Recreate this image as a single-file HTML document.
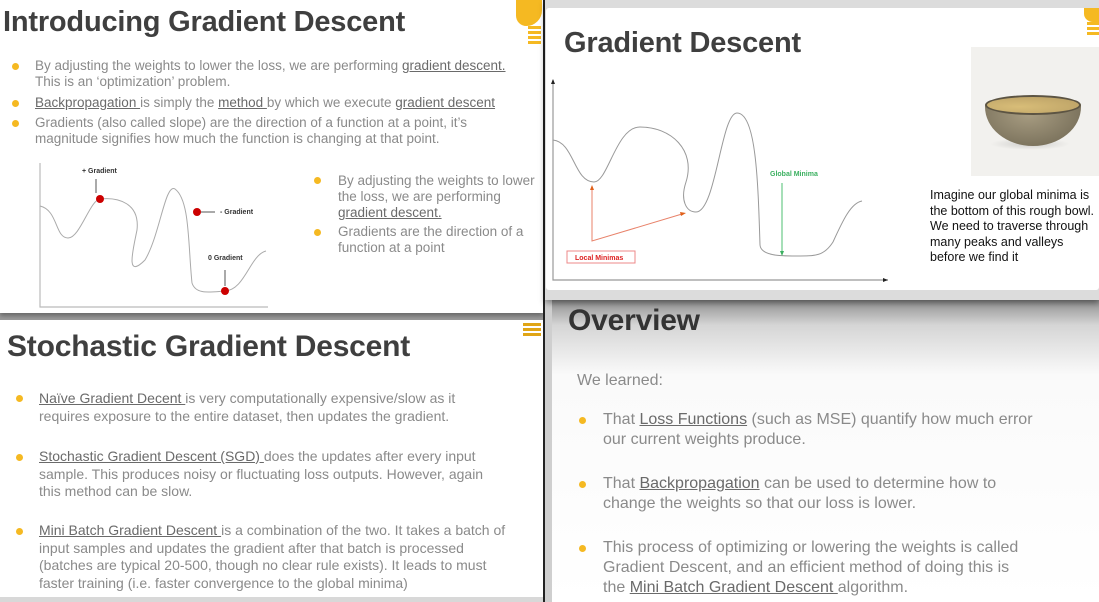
<!DOCTYPE html>
<html><head><meta charset="utf-8"><style>
*{margin:0;padding:0;box-sizing:border-box}
body{width:1099px;height:602px;overflow:hidden;background:#9a9a9a;font-family:"Liberation Sans",sans-serif;position:relative}
.abs{position:absolute}
.t{color:#3f3f3f;font-weight:bold;letter-spacing:-0.2px}
.b{color:#8a8a8a;font-size:13.5px;line-height:16px;white-space:nowrap}
.b u{color:#6a6a6a}
.dot{position:absolute;width:7px;height:7px;border-radius:50%;background:#f5b922}
</style></head><body>

<!-- top-left slide -->
<div class="abs" style="left:0;top:0;width:543px;height:313px;background:#fff;box-shadow:0 3px 4px rgba(0,0,0,.3)"></div>
<div class="abs t" style="left:3px;top:6px;font-size:29px">Introducing Gradient Descent</div>
<div class="abs" style="left:516px;top:0;width:26px;height:26px;background:#f5b922;border-radius:0 0 60% 40%"></div>
<div class="abs" style="left:528px;top:26px;width:13px;height:20px;background:repeating-linear-gradient(#f5b922 0 3px,#fff 3px 5px)"></div>
<div class="dot" style="left:12px;top:63px"></div>
<div class="abs b" style="left:35px;top:58px">By adjusting the weights to lower the loss, we are performing <u>gradient descent.</u><br>This is an ‘optimization’ problem.</div>
<div class="dot" style="left:12px;top:100px"></div>
<div class="abs b" style="left:35px;top:95px"><u>Backpropagation </u>is simply the <u>method </u>by which we execute <u>gradient descent</u></div>
<div class="dot" style="left:12px;top:120px"></div>
<div class="abs b" style="left:35px;top:115px">Gradients (also called slope) are the direction of a function at a point, it’s<br>magnitude signifies how much the function is changing at that point.</div>
<svg class="abs" style="left:0;top:155px" width="300" height="160">
<path d="M40 8 V152 H268" stroke="#bbb" stroke-width="1.2" fill="none"/>
<path d="M40 51 C58 55 55 83 68 83 C80 83 90 45 100 44 C118 42 140 48 137 75 C133 95 125 125 145 105 C160 80 165 28 175 34 C190 45 188 90 192 128 C196 140 210 137 225 136 C245 135 250 100 266 96" stroke="#aaa" fill="none"/>
<circle cx="100" cy="44" r="4" fill="#c00"/><circle cx="197" cy="57" r="4" fill="#c00"/><circle cx="225" cy="136" r="4" fill="#c00"/>
<path d="M96 24V38M201 57H215M225 115V131" stroke="#555"/>
<text x="82" y="18" font-size="7" fill="#333" font-weight="bold">+ Gradient</text>
<text x="220" y="59" font-size="7" fill="#333" font-weight="bold">- Gradient</text>
<text x="208" y="105" font-size="7" fill="#333" font-weight="bold">0 Gradient</text>
</svg>
<div class="dot" style="left:314px;top:177px"></div>
<div class="abs b" style="left:338px;top:173px">By adjusting the weights to lower<br>the loss, we are performing<br><u>gradient descent.</u></div>
<div class="dot" style="left:314px;top:229px"></div>
<div class="abs b" style="left:338px;top:224px">Gradients are the direction of a<br>function at a point</div>

<!-- bottom-left slide -->
<div class="abs" style="left:0;top:320px;width:543px;height:277px;background:#fff"></div>
<div class="abs" style="left:0;top:597px;width:543px;height:5px;background:#d8d8d8"></div>
<div class="abs" style="left:523px;top:323px;width:18px;height:15px;background:repeating-linear-gradient(#e0a516 0 3px,#fff 3px 5px)"></div>
<div class="abs t" style="left:7px;top:330px;font-size:30px">Stochastic Gradient Descent</div>
<div class="dot" style="left:16px;top:395px"></div>
<div class="abs b" style="left:39px;top:390px;font-size:14px;line-height:17.5px"><u>Naïve Gradient Decent </u>is very computationally expensive/slow as it<br>requires exposure to the entire dataset, then updates the gradient.</div>
<div class="dot" style="left:16px;top:454px"></div>
<div class="abs b" style="left:39px;top:448px;font-size:14px;line-height:17.5px"><u>Stochastic Gradient Descent (SGD) </u>does the updates after every input<br>sample. This produces noisy or fluctuating loss outputs. However, again<br>this method can be slow.</div>
<div class="dot" style="left:16px;top:528px"></div>
<div class="abs b" style="left:39px;top:522px;font-size:14px;line-height:17.5px"><u>Mini Batch Gradient Descent </u>is a combination of the two. It takes a batch of<br>input samples and updates the gradient after that batch is processed<br>(batches are typical 20-500, though no clear rule exists). It leads to must<br>faster training (i.e. faster convergence to the global minima)</div>

<div class="abs" style="left:543px;top:0;width:2px;height:602px;background:#222"></div>

<!-- overview slide -->
<div class="abs" style="left:552px;top:300px;width:547px;height:302px;background:linear-gradient(#8f8f8f,#d5d5d5 25px,#fafafa 75px,#fff)"></div>
<div class="abs" style="left:545px;top:300px;width:7px;height:302px;background:#cfcfcf"></div>
<div class="abs t" style="left:568px;top:304px;font-size:30px;color:#333">Overview</div>
<div class="abs b" style="left:577px;top:373px;font-size:16px">We learned:</div>
<div class="dot" style="left:579px;top:417px"></div>
<div class="abs b" style="left:603px;top:410px;font-size:16px;line-height:20px">That <u>Loss Functions</u> (such as MSE) quantify how much error<br>our current weights produce.</div>
<div class="dot" style="left:579px;top:481px"></div>
<div class="abs b" style="left:603px;top:474px;font-size:16px;line-height:20px">That <u>Backpropagation</u> can be used to determine how to<br>change the weights so that our loss is lower.</div>
<div class="dot" style="left:579px;top:545px"></div>
<div class="abs b" style="left:603px;top:538px;font-size:16px;line-height:20px">This process of optimizing or lowering the weights is called<br>Gradient Descent, and an efficient method of doing this is<br>the <u>Mini Batch Gradient Descent </u>algorithm.</div>

<!-- top-right slide -->
<div class="abs" style="left:545px;top:0;width:554px;height:300px;background:#dcdcdc;box-shadow:0 3px 6px rgba(0,0,0,.4)"></div>
<div class="abs" style="left:546px;top:8px;width:553px;height:282px;background:#fff;border-radius:3px"></div>
<div class="abs" style="left:1084px;top:8px;width:15px;height:14px;background:#f5b922;border-radius:0 0 0 60%"></div>
<div class="abs" style="left:1087px;top:22px;width:12px;height:13px;background:repeating-linear-gradient(#f5b922 0 3px,#fff 3px 5px)"></div>
<div class="abs t" style="left:564px;top:27px;font-size:29px">Gradient Descent</div>
<svg class="abs" style="left:546px;top:70px" width="350" height="220">
<path d="M7 10 V210 H342" stroke="#999" stroke-width="1.2" fill="none"/>
<path d="M7 9 l-2 5 h4z M342 210 l-5 -2 v4z" fill="#222"/>
<path d="M7 70 C28 72 28 112 48 112 C62 112 70 57 94 57 C125 57 150 80 140 112 C134 130 140 142 150 142 C170 142 175 43 191 43 C210 43 212 110 214 175 C215 186 235 186 250 186 C270 186 278 186 287 172 C297 150 305 133 316 131" stroke="#999" fill="none"/>
<path d="M46 117V171L136 144" stroke="#e8826a" fill="none"/>
<path d="M46 115 l-2 5 h4z M140 143 l-6 -1 l1 4z" fill="#e0601a"/>
<path d="M236 113V184" stroke="#4cbf70"/>
<path d="M236 186 l-2 -5 h4z" fill="#3bb060"/>
<rect x="21" y="181" width="68" height="12" fill="#fff" stroke="#e88"/>
<text x="29" y="190" font-size="7" fill="#d22" font-weight="bold">Local Minimas</text>
<text x="224" y="106" font-size="7" fill="#3bb060" font-weight="bold">Global Minima</text>
</svg>
<div class="abs" style="left:971px;top:47px;width:128px;height:129px;background:#f2f1ee"></div>
<div class="abs" style="left:957px;top:130px;width:80px;height:12px;border-radius:50%;background:radial-gradient(ellipse,rgba(0,0,0,.15),transparent 70%);left:990px;top:138px"></div>
<div class="abs" style="left:956px;top:0;"></div>
<div class="abs" style="left:957px;top:0"></div>
<div class="abs" style="left:985px;top:100px;width:96px;height:46px;background:radial-gradient(ellipse at 45% 30%,#a89d82,#6b634f);border-radius:8% 8% 50% 50%/15% 15% 85% 85%"></div>
<div class="abs" style="left:985px;top:95px;width:96px;height:20px;background:radial-gradient(ellipse at 35% 60%,#d8bd78,#b89e64);border:2px solid #5c5443;border-radius:50%"></div>
<div class="abs" style="left:930px;top:188px;font-size:12.5px;line-height:15.5px;color:#111;width:170px">Imagine our global minima is the bottom of this rough bowl. We need to traverse through many peaks and valleys before we find it</div>
</body></html>
